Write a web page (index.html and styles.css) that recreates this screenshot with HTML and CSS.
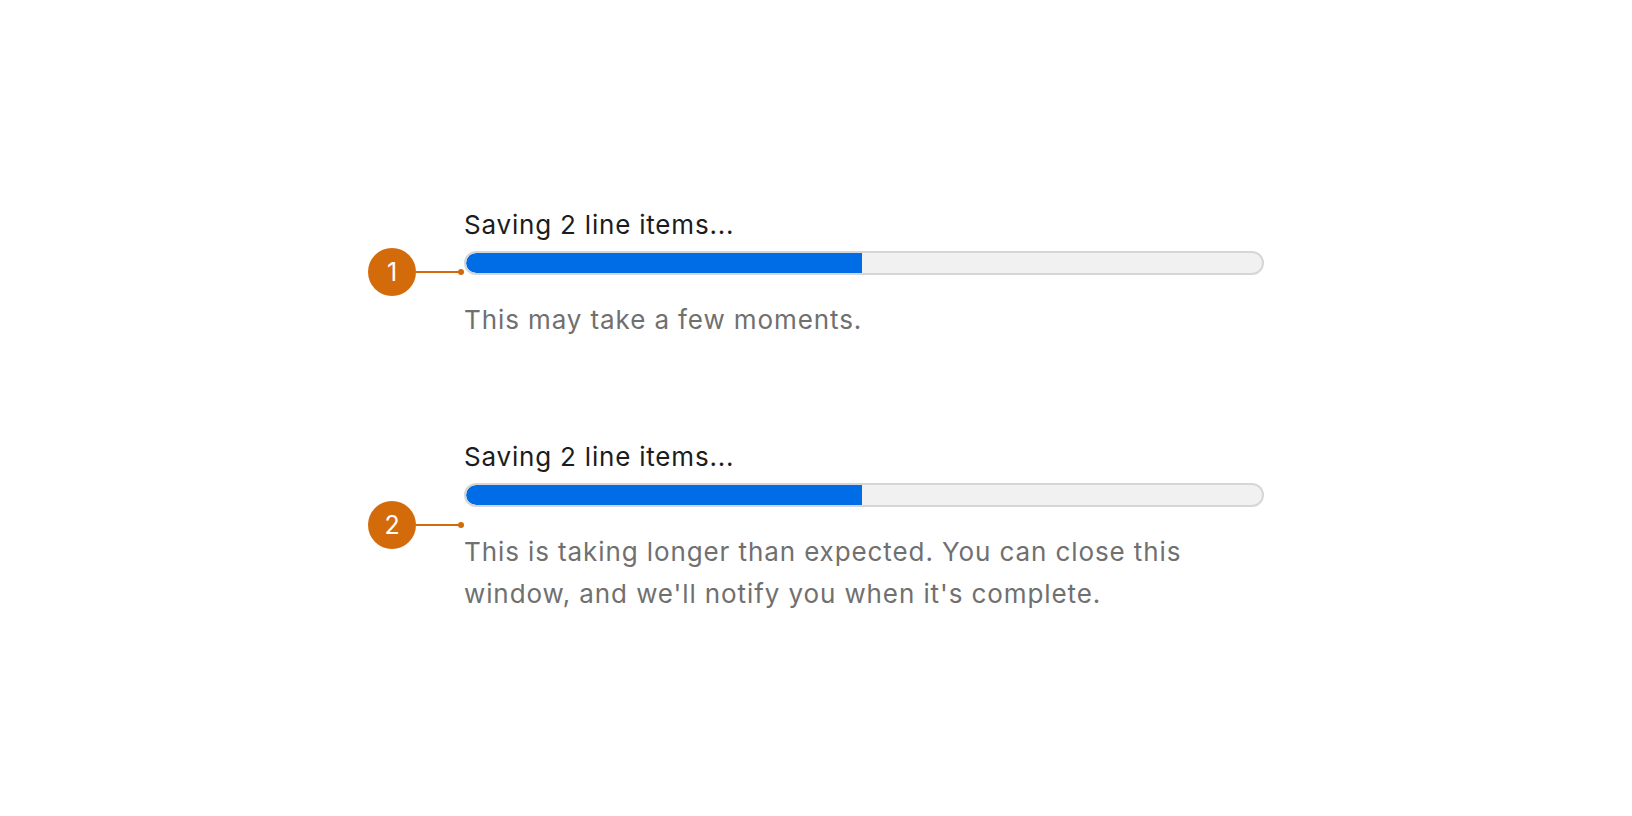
FILE: index.html
```html
<!DOCTYPE html>
<html lang="en">
<head>
<meta charset="utf-8">
<title>Progress</title>
<link rel="stylesheet" href="styles.css">
</head>
<body>
<main class="page">
  <div class="stack">
    <div class="example">
      <div class="marker">
        <span class="badge">1</span>
        <span class="connector"><span class="dot"></span></span>
      </div>
      <div class="progress">
        <div class="label">Saving 2 line items...</div>
        <div class="track"><div class="fill" style="width:49.7%"></div></div>
        <p class="desc">This may take a few moments.</p>
      </div>
    </div>
    <div class="example">
      <div class="marker">
        <span class="badge">2</span>
        <span class="connector"><span class="dot"></span></span>
      </div>
      <div class="progress">
        <div class="label">Saving 2 line items...</div>
        <div class="track"><div class="fill" style="width:49.7%"></div></div>
        <p class="desc">This is taking longer than expected. You can close this window, and we'll notify you when it's complete.</p>
      </div>
    </div>
  </div>
</main>
</body>
</html>
```

FILE: styles.css
```css
* { box-sizing: border-box; }
html, body { margin: 0; padding: 0; background: #ffffff; }
body {
  font-family: Inter, "Noto Sans", "Liberation Sans", sans-serif;
}
.page {
  width: 1632px;
  height: 816px;
  padding-top: 2px;
  display: flex;
  align-items: center;
  justify-content: center;
}
.stack {
  display: flex;
  flex-direction: column;
  gap: 95px;
}
.example {
  display: flex;
  align-items: center;
}
.marker {
  display: flex;
  align-items: center;
}
.badge {
  width: 48px;
  height: 48px;
  border-radius: 50%;
  background: #d36b0a;
  color: #ffffff;
  font-size: 25px;
  font-weight: 400;
  display: flex;
  align-items: center;
  justify-content: center;
  line-height: 1;
}
.connector {
  position: relative;
  width: 48px;
  height: 2px;
  background: linear-gradient(#d36b0a, #d36b0a) left center / 45px 2px no-repeat;
}
.dot {
  position: absolute;
  right: 0;
  top: -2px;
  width: 6px;
  height: 6px;
  border-radius: 50%;
  background: #d36b0a;
}
.progress {
  width: 800px;
}
.label {
  font-size: 26px;
  line-height: 1.6;
  letter-spacing: 0.8px;
  color: #1c1c1c;
  margin-bottom: 6px;
}
.track {
  height: 24px;
  border: 2px solid #d6d6d6;
  background: #f1f1f1;
  border-radius: 12px;
  overflow: hidden;
}
.fill {
  height: 100%;
  background: #006ce6;
  border-radius: 10px 0 0 10px;
}
.desc {
  margin: 24px 0 0;
  font-size: 26px;
  line-height: 1.6;
  letter-spacing: 0.9px;
  color: #707070;
}
```
